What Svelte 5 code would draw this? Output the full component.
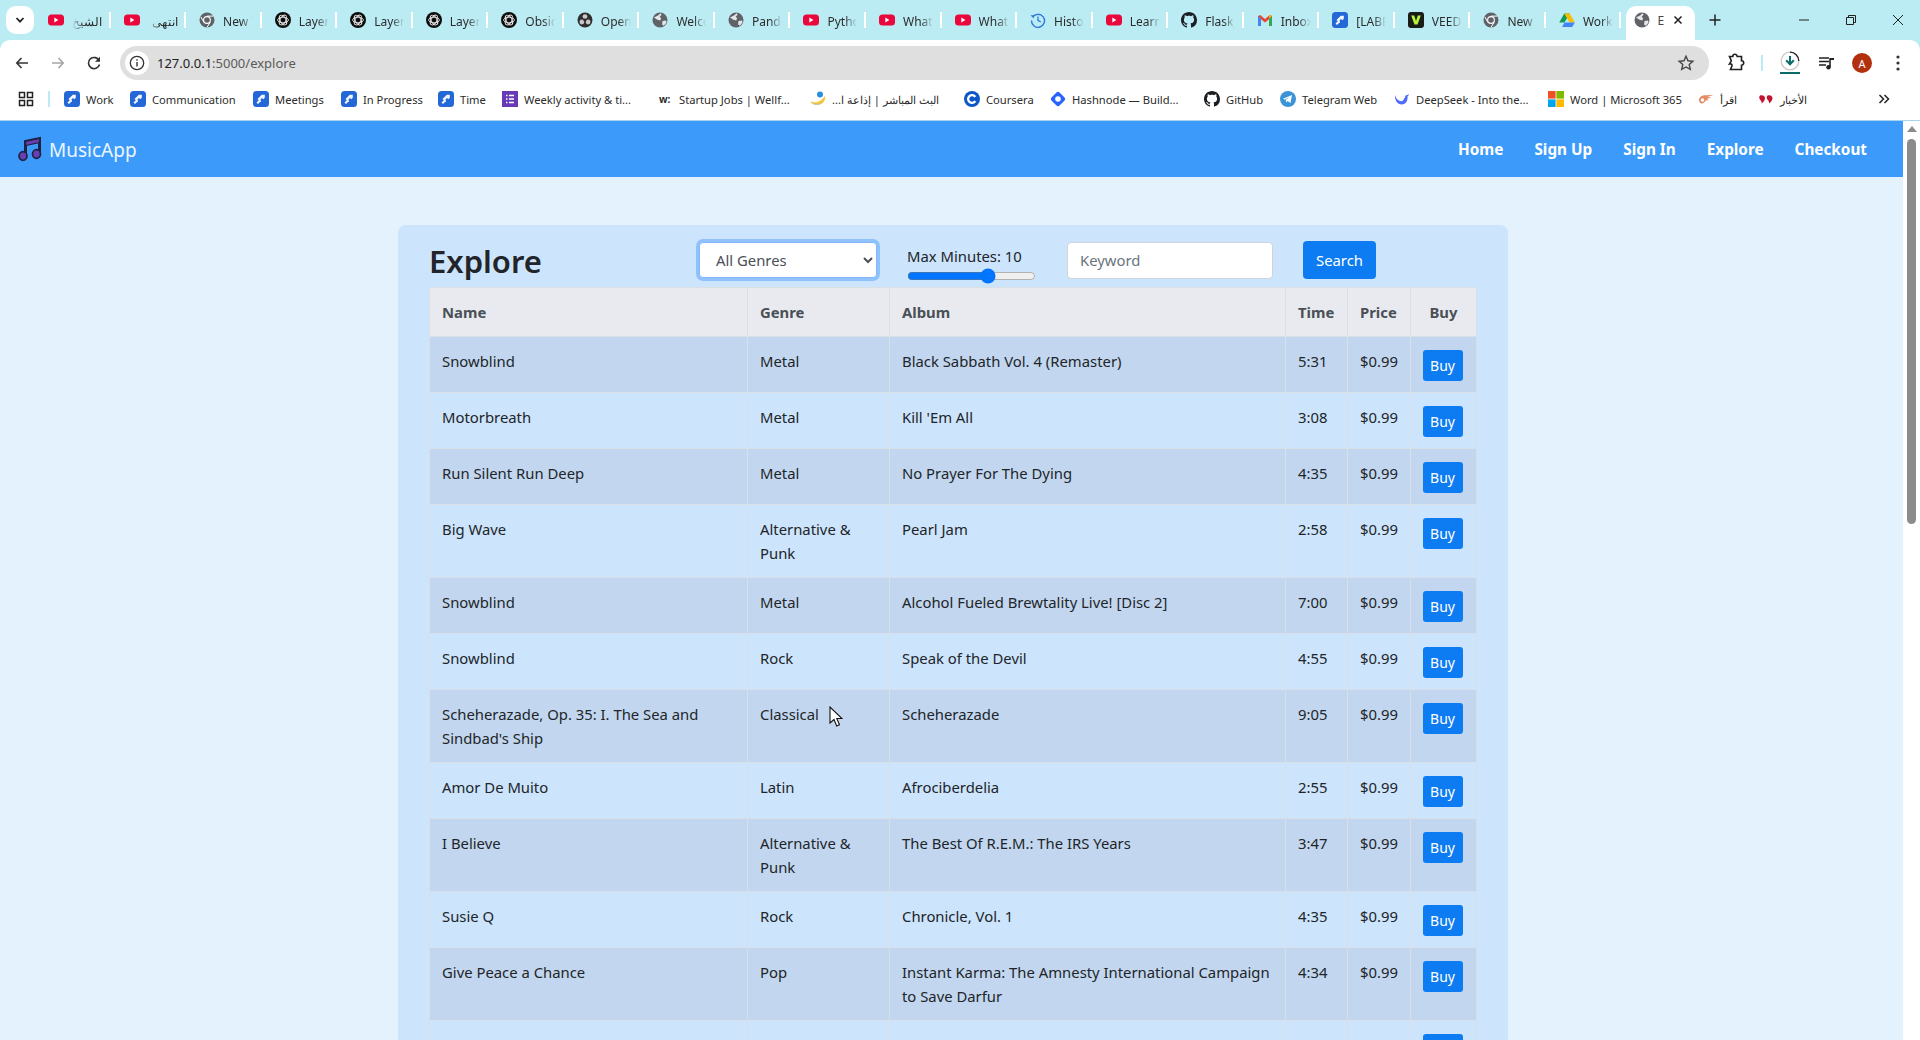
<script>
  const tabs = [
    ['yt', 'الشيخ', true], ['yt', 'انتهى', true], ['chrome', 'New Tab'], ['openai', 'Layer norm'], ['openai', 'Layer norm'], ['openai', 'Layer norm'],
    ['openai', 'Obsidian'], ['obs', 'OpenAI'], ['globe', 'Welcome'], ['globe', 'Pandoc'], ['yt', 'Python'], ['yt', 'What is'], ['yt', 'What is'],
    ['history', 'History'], ['yt', 'Learn'], ['github', 'Flask_'], ['gmail', 'Inbox'], ['jira', '[LABEL'], ['veed', 'VEED'], ['chrome', 'New Tab'], ['drive', 'Work']
  ];
  const bookmarks = [
    ['jira', 'Work', 66], ['jira', 'Communication', 123], ['jira', 'Meetings', 88], ['jira', 'In Progress', 97], ['jira', 'Time', 64],
    ['forms', 'Weekly activity & ti...', 157], ['wf', 'Startup Jobs | Wellf...', 151], ['radio', 'البث المباشر | إذاعة ا...', 154, true],
    ['coursera', 'Coursera', 86], ['hashnode', 'Hashnode — Build...', 154], ['github', 'GitHub', 76], ['telegram', 'Telegram Web', 114],
    ['deepseek', 'DeepSeek - Into the...', 154], ['ms', 'Word | Microsoft 365', 150], ['iqra', 'اقرأ', 60, true], ['akhbar', 'الأخبار', 100, true]
  ];
  const rows = [
    ['Snowblind', 'Metal', 'Black Sabbath Vol. 4 (Remaster)', '5:31'],
    ['Motorbreath', 'Metal', "Kill 'Em All", '3:08'],
    ['Run Silent Run Deep', 'Metal', 'No Prayer For The Dying', '4:35'],
    ['Big Wave', 'Alternative & Punk', 'Pearl Jam', '2:58'],
    ['Snowblind', 'Metal', 'Alcohol Fueled Brewtality Live! [Disc 2]', '7:00'],
    ['Snowblind', 'Rock', 'Speak of the Devil', '4:55'],
    ["Scheherazade, Op. 35: I. The Sea and Sindbad's Ship", 'Classical', 'Scheherazade', '9:05'],
    ['Amor De Muito', 'Latin', 'Afrociberdelia', '2:55'],
    ['I Believe', 'Alternative & Punk', 'The Best Of R.E.M.: The IRS Years', '3:47'],
    ['Susie Q', 'Rock', 'Chronicle, Vol. 1', '4:35'],
    ['Give Peace a Chance', 'Pop', 'Instant Karma: The Amnesty International Campaign to Save Darfur', '4:34'],
    ['Canção de Amanhã Só', 'Latin', 'Afrociberdelia', '3:12']
  ];
  const github = 'M8 0C3.58 0 0 3.58 0 8c0 3.54 2.29 6.53 5.47 7.59.4.07.55-.17.55-.38 0-.19-.01-.82-.01-1.49-2.01.37-2.53-.49-2.69-.94-.09-.23-.48-.94-.82-1.13-.28-.15-.68-.52-.01-.53.63-.01 1.08.58 1.23.82.72 1.21 1.87.87 2.33.66.07-.52.28-.87.51-1.07-1.78-.2-3.64-.89-3.64-3.95 0-.87.31-1.59.82-2.15-.08-.2-.36-1.02.08-2.12 0 0 .67-.21 2.2.82.64-.18 1.32-.27 2-.27.68 0 1.36.09 2 .27 1.53-1.04 2.2-.82 2.2-.82.44 1.1.16 1.92.08 2.12.51.56.82 1.27.82 2.15 0 3.07-1.87 3.75-3.65 3.95.29.25.54.73.54 1.48 0 1.07-.01 1.93-.01 2.2 0 .21.15.46.55.38A8.013 8.013 0 0016 8c0-4.42-3.58-8-8-8z';
</script>

{#snippet icon(name)}
  <svg class="ico" viewBox="0 0 16 16" aria-hidden="true">
    {#if name === 'yt'}
      <rect x="0" y="2.5" width="16" height="11" rx="3.5" fill="#e9073b" /><path d="M6.3 5.6v4.8L10.4 8z" fill="#fff" />
    {:else if name === 'chrome'}
      <circle cx="8" cy="8" r="7.5" fill="#5f6368" /><circle cx="8" cy="8" r="3.9" fill="#fff" /><circle cx="8" cy="8" r="2.8" fill="#5f6368" />
      <path d="M8 4.1h6.4M5 10.5 1.9 5M11.2 10.2 8 15.4" stroke="#fff" stroke-width="1" fill="none" />
    {:else if name === 'openai'}
      <circle cx="8" cy="8" r="8" fill="#0d0d0d" />
      <g fill="none" stroke="#e8e8e8" stroke-width=".9"><ellipse cx="8" cy="8" rx="5.4" ry="2.8" /><ellipse cx="8" cy="8" rx="5.4" ry="2.8" transform="rotate(60 8 8)" /><ellipse cx="8" cy="8" rx="5.4" ry="2.8" transform="rotate(120 8 8)" /></g>
    {:else if name === 'obs'}
      <circle cx="8" cy="8" r="7.5" fill="#302e31" />
      <circle cx="8" cy="4.6" r="2.4" fill="#c8c8c8" /><circle cx="4.9" cy="10" r="2.4" fill="#c8c8c8" /><circle cx="11.1" cy="10" r="2.4" fill="#c8c8c8" /><circle cx="8" cy="8" r="1.6" fill="#302e31" />
    {:else if name === 'globe'}
      <circle cx="8" cy="8" r="7.5" fill="#5f6368" />
      <path d="M2 5.5 6 3.6 8.6 1.2l1 1.6-2 2 1.6 1.4-1 2.2-2.8-.6zM10.5 9l3.6-.6.4 2-2.6 3.4-1.8-1.4z" fill="#e4e6e8" />
    {:else if name === 'history'}
      <path d="M2.6 5.2A6.5 6.5 0 1 1 1.5 8.6" fill="none" stroke="#2f78e0" stroke-width="1.4" /><path d="M.5 4.4h3.7V8z" fill="#2f78e0" transform="translate(0 -.6) scale(.9)" /><path d="M8 4.5V8.4l2.8 1.6" fill="none" stroke="#2f78e0" stroke-width="1.3" />
    {:else if name === 'github'}
      <path d={github} fill="#1b1f23" />
    {:else if name === 'gmail'}
      <path d="M1 14V4l2.2-1L8 7l4.8-4L15 4v10h-3V7.2L8 10.4 4 7.2V14z" fill="#ea4335" /><path d="M1 14V4l3 2.6V14z" fill="#4285f4" /><path d="M12 14V6.6L15 4v10z" fill="#34a853" /><path d="m12 6.6 3-2.6-2.2-1L12 3.600z" fill="#fbbc04" />
    {:else if name === 'jira'}
      <rect width="16" height="16" rx="3.5" fill="#2468d8" />
      <path d="M4.5 8 8.800 3.700h3v3L7.500 11ZM3.500 11.500 8 7l1.500 1.500L5 13Z" fill="#fff" opacity=".95" /><path d="M7.500 8.500 9 7l2 2v3H8.500z" fill="#2468d8" />
    {:else if name === 'veed'}
      <rect width="16" height="16" rx="3" fill="#1a1c18" /><path d="M3.200 3.500h3L8 9l1.800-5.500h3L9.500 12.500h-3z" fill="#b8f53a" />
    {:else if name === 'drive'}
      <path d="M5.300 1.500h5.400L5.500 10.500H.2z" fill="#0f9d58" /><path d="M5.300 1.500h5.400l5.100 9h-5.300z" fill="#fbbc04" /><path d="M3 15 5.500 10.500h10.300L13.200 15z" fill="#4285f4" />
    {:else if name === 'forms'}
      <rect width="16" height="16" fill="#673ab7" /><path d="M4 4.500h1.500M4 8h1.500M4 11.500h1.500M7 4.500h5M7 8h5M7 11.500h5" stroke="#fff" stroke-width="1.500" />
    {:else if name === 'radio'}
      <path d="M.5 10c3 2.500 9.500 2 14.500-5 1 5-3 9-8 9-3.500 0-6-1.500-6.500-4z" fill="#f3c63f" /><path d="M1.500 11.500c4 2.500 8 2 11 0-2.500 2.500-7.500 3.500-11 0z" fill="#8fcfe8" /><circle cx="10" cy="3.500" r="3" fill="#2a8fd8" />
    {:else if name === 'coursera'}
      <circle cx="8" cy="8" r="8" fill="#0e57c9" /><path d="M11.300 10.100A3.900 3.900 0 1 1 11.300 5.900" fill="none" stroke="#fff" stroke-width="2.300" />
    {:else if name === 'hashnode'}
      <rect x="2.300" y="2.300" width="11.400" height="11.400" rx="2.500" fill="#2962ff" transform="rotate(45 8 8)" /><circle cx="8" cy="8" r="2.800" fill="#fff" />
    {:else if name === 'telegram'}
      <circle cx="8" cy="8" r="8" fill="#3b93d8" /><path d="m3 7.800 9-3.700-1.500 8-3-2.100-1.400 1.400-.3-2.400 4-3.300-5 3z" fill="#fff" />
    {:else if name === 'deepseek'}
      <path d="M1 4c1 3 2 5 5 6 2 .7 3 0 4-2l1-3c1-1 3-1 4-2-.5 1.500-1 2-1.500 2.500.500 3-1 8-6 8C3.500 13.500.5 9 1 4z" fill="#4d6bfe" /><circle cx="10.600" cy="6" r=".7" fill="#fff" />
    {:else if name === 'ms'}
      <rect x="0" y="0" width="7.600" height="7.600" fill="#f25022" /><rect x="8.400" y="0" width="7.600" height="7.600" fill="#7fba00" /><rect x="0" y="8.400" width="7.600" height="7.600" fill="#00a4ef" /><rect x="8.400" y="8.400" width="7.600" height="7.600" fill="#ffb900" />
    {:else if name === 'iqra'}
      <path d="M1 9c0-3 3-5 7-4.800L15.500 4 9 6l4.500.5L8.500 8l2.500 1-3.500.8C7 12 3 13.500 1.800 11.500 1.300 10.800 1 10 1 9z" fill="#e58a63" /><circle cx="4.500" cy="9" r="1.800" fill="#fff" />
    {:else if name === 'akhbar'}
      <path d="M2 4.500c2.500-1 5 .5 5 2.500 0 3-2.500 4.500-3.500 5.500.3-1.500 0-2.500-1-3.300C1 8 .8 5.500 2 4.500zM9.500 4.500c2.500-1 5 .5 5 2.500 0 3-2.500 4.500-3.500 5.500.3-1.500 0-2.500-1-3.300-1.500-1.200-1.700-3.700-.5-4.700z" fill="#c4122f" />
    {/if}
  </svg>
{/snippet}

<div class="screen">
  <header class="chrome">
    <div class="strip">
      <button class="tablist"><svg width="12" height="12" viewBox="0 0 12 12"><path d="m2.500 4 3.500 3.700L9.500 4" fill="none" stroke="#1f1f1f" stroke-width="1.700" /></svg></button>
      <div class="tabs">
        {#each tabs as [ic, label, rtl]}
          <div class="tab">
            {@render icon(ic)}
            <span class="tab-label" class:rtl>{label}</span>
          </div>
        {/each}
      </div>
      <div class="tab-active">
        {@render icon('globe')}
        <span class="active-label">Explore</span>
        <svg class="close" width="12" height="12" viewBox="0 0 12 12"><path d="m2.500 2.500 7 7m0-7-7 7" stroke="#1f1f1f" stroke-width="1.500" /></svg>
      </div>
      <svg class="plus" width="14" height="14" viewBox="0 0 14 14"><path d="M7 1.500v11M1.500 7h11" stroke="#222" stroke-width="1.500" /></svg>
      <div class="winctl">
        <svg width="12" height="12" viewBox="0 0 12 12"><path d="M1 6h10" stroke="#222" /></svg>
        <svg width="12" height="12" viewBox="0 0 12 12"><path d="M1.500 3.500h7v7h-7zM3.500 3.500v-2h7v7h-2" fill="none" stroke="#222" /></svg>
        <svg width="12" height="12" viewBox="0 0 12 12"><path d="m1 1 10 10m0-10L1 11" stroke="#222" /></svg>
      </div>
    </div>

    <div class="toolbar">
      <svg class="nav-ic first" width="16" height="16" viewBox="0 0 16 16"><path d="M14 8H3M7.500 3 2.800 8l4.700 5" fill="none" stroke="#333" stroke-width="1.600" /></svg>
      <svg class="nav-ic" width="16" height="16" viewBox="0 0 16 16"><path d="M2 8h11M8.500 3l4.700 5-4.700 5" fill="none" stroke="#a5a5a5" stroke-width="1.600" /></svg>
      <svg class="nav-ic" width="16" height="16" viewBox="0 0 16 16"><path d="M13.300 6A5.600 5.600 0 1 0 13.500 9.500" fill="none" stroke="#333" stroke-width="1.600" /><path d="M14 1.800v5H9z" fill="#333" /></svg>
      <div class="omnibox">
        <span class="site-info"><svg width="16" height="16" viewBox="0 0 16 16"><circle cx="8" cy="8" r="6.700" fill="none" stroke="#333" stroke-width="1.300" /><path d="M8 7v4.500M8 4.300v1.500" stroke="#333" stroke-width="1.400" /></svg></span>
        <span class="url"><span class="host">127.0.0.1</span>:5000/explore</span>
        <svg class="star" width="18" height="18" viewBox="0 0 18 18"><path d="m9 2.300 2 4.500 4.900.5-3.700 3.300 1.100 4.800L9 13l-4.300 2.400 1.100-4.800L2.100 7.300 7 6.800z" fill="none" stroke="#444" stroke-width="1.400" /></svg>
      </div>
      <div class="tool-right">
        <svg width="20" height="20" viewBox="0 0 20 20"><path d="M3.500 3.500h3.300a2.200 2.200 0 0 1 4.400 0h4.300v4.300a2.200 2.200 0 0 1 0 4.400v4.300H4.500l1.400-3.300c.8-1.700-.6-2.700-2.400-2.200l1.800-3.200z" fill="none" stroke="#1f1f1f" stroke-width="1.600" /></svg>
        <span class="tool-sep"></span>
        <span class="dl">
          <svg width="22" height="20" viewBox="0 0 22 20"><circle cx="11" cy="10" r="8.800" fill="none" stroke="#c9c9c9" stroke-width="1.300" /><path d="M11 1.200A8.800 8.800 0 0 1 19.800 10" fill="none" stroke="#222" stroke-width="1.300" /><path d="M11 5v8M7.200 9.300 11 13.300l3.800-4" fill="none" stroke="#0b6b6b" stroke-width="2" /></svg>
          <i></i>
        </span>
        <svg class="media" width="18" height="16" viewBox="0 0 18 16"><path d="M1 3h10M1 6.500h10M1 10h7" stroke="#222" stroke-width="1.500" /><path d="M12 3.200V12" stroke="#222" stroke-width="1.600" /><circle cx="10.500" cy="12.300" r="2.200" fill="#222" /><path d="M12 3h4v2h-4z" fill="#222" /></svg>
        <span class="avatar">A</span>
        <svg class="kebab" width="4" height="16" viewBox="0 0 4 16"><circle cx="2" cy="2" r="1.600" fill="#333" /><circle cx="2" cy="8" r="1.600" fill="#333" /><circle cx="2" cy="14" r="1.600" fill="#333" /></svg>
      </div>
    </div>

    <div class="bookmarks">
      <svg class="apps" width="16" height="16" viewBox="0 0 16 16"><g fill="none" stroke="#222" stroke-width="1.500"><rect x="1.500" y="1.500" width="5" height="5" /><rect x="9.500" y="1.500" width="5" height="5" /><rect x="1.500" y="9.500" width="5" height="5" /><rect x="9.500" y="9.500" width="5" height="5" /></g></svg>
      <span class="bm-sep"></span>
      {#each bookmarks as [ic, label, w, rtl]}
        <div class="bm" style="width:{w}px">
          {#if ic === 'wf'}
            <b class="wf">w:</b>
          {:else}
            {@render icon(ic)}
          {/if}
          <span dir={rtl ? 'rtl' : 'ltr'}>{label}</span>
        </div>
      {/each}
      <svg class="more" width="12" height="12" viewBox="0 0 12 12"><path d="m1.500 2 4 4-4 4M6.500 2l4 4-4 4" fill="none" stroke="#222" stroke-width="1.500" /></svg>
    </div>
  </header>

  <div class="viewport">
    <div class="page">
      <nav class="navbar">
        <div class="brand">
          <svg width="24" height="26" viewBox="0 0 24 26"><path d="M7.500 19V5.500l14-3V17" fill="none" stroke="#1d2340" stroke-width="3" /><path d="M7.500 5.500l14-3v4l-14 3z" fill="#6a3fb5" stroke="#1d2340" stroke-width="1.200" /><ellipse cx="5" cy="20" rx="4" ry="4.300" fill="#6a3fb5" stroke="#1d2340" stroke-width="1.700" /><ellipse cx="18.500" cy="18" rx="4" ry="4.300" fill="#6a3fb5" stroke="#1d2340" stroke-width="1.700" /></svg>
          <span>MusicApp</span>
        </div>
        <div class="links">
          <a href="#home">Home</a><a href="#signup">Sign Up</a><a href="#signin">Sign In</a><a href="#explore">Explore</a><a href="#checkout">Checkout</a>
        </div>
      </nav>

      <main class="card">
        <div class="head">
          <h1>Explore</h1>
          <select class="genre"><option>All Genres</option></select>
          <label class="range">
            <span>Max Minutes: 10</span>
            <input type="range" min="1" max="15" value="10" />
          </label>
          <input class="keyword" type="text" placeholder="Keyword" />
          <button class="search">Search</button>
        </div>
        <table>
          <colgroup><col class="c1" /><col class="c2" /><col class="c3" /><col class="c4" /><col class="c5" /><col class="c6" /></colgroup>
          <thead>
            <tr><th>Name</th><th>Genre</th><th>Album</th><th>Time</th><th>Price</th><th class="center">Buy</th></tr>
          </thead>
          <tbody>
            {#each rows as [name, genre, album, time]}
              <tr>
                <td>{name}</td><td>{genre}</td><td>{album}</td><td>{time}</td><td>$0.99</td>
                <td class="center buy-cell"><button class="buy">Buy</button></td>
              </tr>
            {/each}
          </tbody>
        </table>
      </main>
    </div>
    <aside class="scrollbar">
      <svg width="10" height="6" viewBox="0 0 10 6"><path d="M5 0 10 6H0z" fill="#8b8b8b" /></svg>
      <i></i>
    </aside>
    <svg class="cursor" width="14" height="22" viewBox="0 0 14 22"><path d="M1 1v16l4-3.500 2.700 6.500 2.800-1.200L7.800 12.500H13z" fill="#fff" stroke="#111" stroke-width="1.100" /></svg>
  </div>
</div>

<style>
  :global(body) { margin: 0; overflow: hidden; background: #e3f2fd; }
  .screen { width: 1920px; height: 1040px; display: flex; flex-direction: column; overflow: hidden; font-family: "Noto Sans", "Open Sans", sans-serif; color: #212529; }
  .chrome { flex: 0 0 121px; display: flex; flex-direction: column; background: #bbebf3; }
  .ico { width: 16px; height: 16px; flex: 0 0 16px; }

  .strip { height: 40px; display: flex; align-items: flex-end; padding-left: 6px; }
  .tablist { width: 28px; height: 28px; margin-bottom: 6px; margin-right: 2px; padding: 0; border: 0; background: #fff; border-radius: 10px; display: flex; align-items: center; justify-content: center; }
  .tabs { display: flex; height: 40px; }
  .tab { width: 75.55px; box-sizing: border-box; display: flex; align-items: center; padding: 0 0 0 12px; gap: 8px; position: relative; font-size: 12px; color: #2c2c2c; border-right: 2px solid transparent; }
  .tab::after { content: ""; position: absolute; right: -1px; top: 12px; height: 16px; width: 2px; background: #fff; }
  .tab-label { flex: 0 0 30px; width: 30px; overflow: hidden; white-space: nowrap; -webkit-mask-image: linear-gradient(90deg, #000 60%, transparent); mask-image: linear-gradient(90deg, #000 60%, transparent); margin-top: 2px; }
  .tab-label.rtl { direction: rtl; -webkit-mask-image: linear-gradient(270deg, #000 60%, transparent); mask-image: linear-gradient(270deg, #000 60%, transparent); }
  .tab-active { width: 69px; height: 34px; box-sizing: border-box; margin-left: 4px; background: #fff; border-radius: 10px 10px 0 0; display: flex; align-items: center; padding: 0 0 6px 8px; font-size: 12px; }
  .active-label { width: 7px; overflow: hidden; margin-left: 7px; color: #444; }
  .close { margin-left: 8px; }
  .plus { margin: 0 0 13px 13px; }
  .winctl { margin-left: auto; display: flex; gap: 35px; padding-right: 16px; margin-bottom: 14px; }

  .toolbar { height: 40px; background: #fff; border-radius: 10px 10px 0 0; display: flex; align-items: flex-end; box-sizing: border-box; }
  .nav-ic { margin: 0 20px 9px 0; }
  .nav-ic.first { margin-left: 14px; }
  .omnibox { width: 1589px; margin-left: -2px; height: 34px; background: #dfdfdf; border-radius: 17px; display: flex; align-items: center; padding: 0 14px 0 5px; box-sizing: border-box; }
  .site-info { width: 24px; height: 24px; border-radius: 50%; background: #fff; display: flex; align-items: center; justify-content: center; }
  .url { margin-left: 8px; font-size: 13px; color: #5a5a5a; }
  .host { color: #222; }
  .star { margin-left: auto; }
  .tool-right { flex: 1; display: flex; align-items: center; height: 34px; padding-left: 17px; }
  .tool-sep { width: 2px; height: 16px; background: #bbebf3; margin: 0 16px 0 15px; }
  .dl { position: relative; width: 22px; height: 24px; display: flex; flex-direction: column; align-items: center; }
  .dl i { display: block; width: 20px; height: 2px; background: #0b6b6b; margin-top: 1px; }
  .media { margin-left: 17px; }
  .avatar { width: 20px; height: 20px; border-radius: 50%; background: #b3300f; color: #fff; font-size: 11px; display: flex; align-items: center; justify-content: center; margin-left: 16px; }
  .kebab { margin-left: 24px; }

  .bookmarks { height: 41px; box-sizing: border-box; background: #fff; border-bottom: 1px solid #a9d4ee; display: flex; align-items: center; padding: 0 0 2px 18px; font-size: 11.2px; color: #2b2b2b; white-space: nowrap; }
  .apps { flex: none; }
  .bm-sep { width: 2px; height: 16px; background: #bbebf3; margin: 0 14px 0 14px; }
  .bm { display: flex; align-items: center; gap: 6px; overflow: hidden; flex: none; }
  .wf { width: 14px; font-size: 10px; font-weight: 700; }
  .more { margin-left: 20px; flex: none; }

  .viewport { flex: 1; min-height: 0; display: flex; position: relative; }
  .page { flex: 1; min-width: 0; background: #e3f2fd; overflow: hidden; }
  .navbar { height: 56px; background: #3c9bfa; display: flex; align-items: center; justify-content: space-between; padding: 0 36px 0 18px; }
  .brand { display: flex; align-items: center; gap: 7px; color: #eaf6ff; font-size: 19px; }
  .brand span { padding-top: 2px; }
  .links { display: flex; gap: 31px; }
  .links a { color: #fff; font-weight: 700; font-size: 15.3px; text-decoration: none; }

  .card { box-sizing: border-box; width: 1110px; margin: 48px 0 0 398px; padding: 16px 31px 0; background: #cce4fc; border-radius: 8px 8px 0 0; }
  .head { display: flex; align-items: center; height: 38px; margin-bottom: 8px; }
  h1 { width: 270px; margin: 0; padding-top: 2px; font-size: 31px; font-weight: 600; line-height: 38px; color: #212529; flex: none; }
  .genre { width: 178px; height: 36px; box-sizing: border-box; padding: 0 12px; border: 1px solid #86b7fe; border-radius: 4px; background: #fff; color: #495057; font: 14.85px "Noto Sans", sans-serif; box-shadow: 0 0 0 3px #8fc2fd; }
  .range { width: 129px; margin: 5px 0 0 30px; align-self: flex-start; display: flex; flex-direction: column; gap: 2px; font-size: 14.85px; line-height: 20px; }
  .range input { width: 129px; height: 16px; margin: 0; }
  .keyword { box-sizing: border-box; width: 206px; height: 37px; margin-left: 31px; padding: 0 12px; border: 1px solid #ced4da; border-radius: 4px; background: #fff; font: 14.85px "Noto Sans", sans-serif; }
  .keyword::placeholder { color: #6c757d; }
  .search { width: 73px; height: 38px; margin-left: 30px; padding: 0; border: 0; border-radius: 4px; background: #0d7cf2; color: #fff; font: 14.85px "Noto Sans", sans-serif; }

  table { width: 1047px; table-layout: fixed; border-collapse: collapse; font-size: 14.85px; line-height: 24px; }
  .c1 { width: 318px; } .c2 { width: 142px; } .c3 { width: 396px; } .c4 { width: 62px; } .c5 { width: 63px; } .c6 { width: 66px; }
  th, td { padding: 12px; border: 1px solid #d8dfe6; text-align: left; vertical-align: top; }
  th { background: #e9eaef; color: #495057; font-weight: 700; }
  tbody tr:nth-child(odd) { background: #c2d7ef; }
  .center { text-align: center; }
  .buy-cell { padding: 13px 13px 11px 11px; }
  .buy { display: block; width: 40px; height: 31px; margin: 0 auto; padding: 0; border: 0; border-radius: 3px; background: #0d7cf2; color: #fff; font: 14px "Noto Sans", sans-serif; }

  .scrollbar { flex: 0 0 17px; box-sizing: border-box; background: #fff; display: flex; flex-direction: column; align-items: center; padding-top: 5px; }
  .scrollbar i { display: block; width: 9px; height: 385px; margin-top: 7px; border-radius: 5px; background: #8b8b8b; }
  .cursor { position: absolute; left: 829px; top: 585px; }
</style>
